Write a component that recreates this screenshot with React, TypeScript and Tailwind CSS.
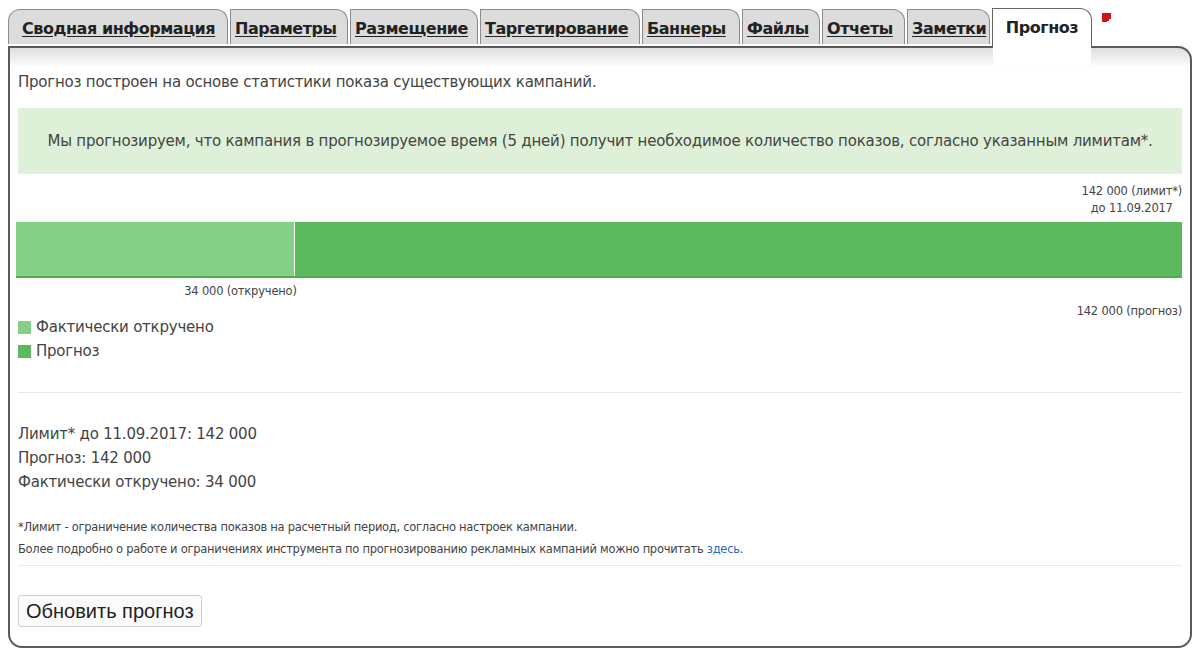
import React from "react";

const tabs = [
  { label: "Сводная информация", w: "w-[220px]", first: true },
  { label: "Параметры", w: "w-[118px]" },
  { label: "Размещение", w: "w-[128px]" },
  { label: "Таргетирование", w: "w-[160px]" },
  { label: "Баннеры", w: "w-[98px]" },
  { label: "Файлы", w: "w-[78px]" },
  { label: "Отчеты", w: "w-[83px]" },
  { label: "Заметки", w: "w-[83px]" },
];

const limit = 142000;
const shown = 34000;

function Flag() {
  return (
    <svg width="9" height="10" viewBox="0 0 9 10" className="mt-[5px] ml-[8px] self-start">
      <polygon points="0,0 9,0 9,6 7,6 7,8 5,8 5,9 0,9" fill="#d0121b" />
    </svg>
  );
}

export default function App() {
  const pct = (shown / limit) * 100;

  return (
    <div className="w-[1200px] h-[654px] bg-white px-2 pt-2 font-['DejaVu_Sans',sans-serif] text-[#444]">
      <div className="flex items-end gap-[2px] h-[38px]">
        {tabs.map((t) => (
          <div
            key={t.label}
            className={`${t.w} h-[35px] mb-[2px] flex items-center pt-[3px] bg-[#dcdcdc] border border-b-0 border-[#8c8c8c] rounded-tr-[12px] ${
              t.first ? "rounded-tl-[12px] pl-[13px]" : "pl-[4px]"
            }`}
          >
            <span className="text-[16px] tracking-[-0.45px] font-bold text-[#222] underline underline-offset-2">
              {t.label}
            </span>
          </div>
        ))}
        <div className="relative z-10 w-[100px] h-[38px] flex items-center justify-center pt-[1px] bg-white border border-b-0 border-[#666] rounded-tr-[12px]">
          <span className="text-[16px] tracking-[-0.45px] font-bold text-[#222]">Прогноз</span>
          <div className="absolute left-0 right-0 top-full h-[20px] bg-white" />
        </div>
        <Flag />
      </div>

      <div className="h-[602px] border-2 border-[#5a5a5a] rounded-tr-[14px] rounded-b-[14px] bg-[linear-gradient(to_bottom,#dedede,#ffffff_20px)] px-2 pt-[24px]">
        <p className="text-[15px] tracking-[-0.22px] leading-[20px]">
          Прогноз построен на основе статистики показа существующих кампаний.
        </p>

        <div className="mt-4 h-[66px] bg-[#dff0d8] flex items-center justify-center text-[15px] tracking-[-0.22px]">
          Мы прогнозируем, что кампания в прогнозируемое время (5 дней) получит необходимое количество показов, согласно указанным лимитам*.
        </div>

        <div className="mt-[9px] flex justify-end">
          <div className="text-center text-[11.5px] tracking-[-0.2px] leading-[17px]">
            <div>142 000 (лимит*)</div>
            <div>до 11.09.2017</div>
          </div>
        </div>

        <div className="mt-[5px] -ml-[2px] h-[56px] flex bg-[#5cb85c] border-b-2 border-[#4cae4c]">
          <div className="h-full bg-[#86cf86] border-r border-white" style={{ width: `${pct}%` }} />
        </div>

        <div className="mt-[5px] flex">
          <div
            className="text-right text-[11.5px] tracking-[-0.2px] leading-[17px]"
            style={{ width: `${pct}%` }}
          >
            34 000 (откручено)
          </div>
        </div>

        <div className="mt-[3px] flex justify-between items-start">
          <div className="mt-[12px] text-[15px] tracking-[-0.22px] leading-[24px]">
            <div className="flex items-center gap-[5px]">
              <span className="w-[13px] h-[13px] bg-[#86cf86]" />
              Фактически откручено
            </div>
            <div className="flex items-center gap-[5px]">
              <span className="w-[13px] h-[13px] bg-[#5cb85c]" />
              Прогноз
            </div>
          </div>
          <div className="text-[11.5px] tracking-[-0.2px] leading-[17px]">142 000 (прогноз)</div>
        </div>

        <div className="mt-[29px] border-t border-[#e8e8e8]" />

        <div className="mt-[29px] text-[15px] tracking-[-0.22px] leading-[24px]">
          <div>Лимит* до 11.09.2017: 142 000</div>
          <div>Прогноз: 142 000</div>
          <div>Фактически откручено: 34 000</div>
        </div>

        <div className="mt-[22px] text-[11.5px] tracking-[-0.28px] leading-[22px]">
          <div>*Лимит - ограничение количества показов на расчетный период, согласно настроек кампании.</div>
          <div>
            Более подробно о работе и ограничениях инструмента по прогнозированию рекламных кампаний можно прочитать{" "}
            <a className="text-[#2a6db5]">здесь</a>.
          </div>
        </div>

        <div className="mt-[5px] border-t border-[#e8e8e8]" />

        <button className="mt-[29px] h-[32px] px-[7px] border border-[#cfcfcf] rounded-[3px] bg-[#fbfbfb] text-[20px] text-[#222] font-['Liberation_Sans',sans-serif]">
          Обновить прогноз
        </button>
      </div>
    </div>
  );
}
